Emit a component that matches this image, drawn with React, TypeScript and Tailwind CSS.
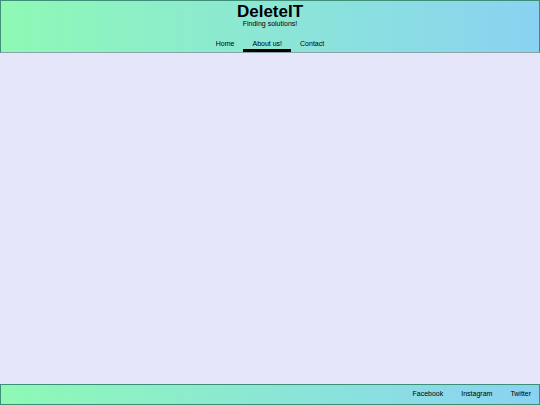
export default function App() {
  return (
    <div className="flex min-h-[405px] flex-col bg-[#e6e6fa] font-['Liberation_Sans',Arial,sans-serif] text-black">
      <header className="flex h-[53px] flex-col items-center border border-[#3f8f78] border-b-[#8aa3a8] bg-gradient-to-r from-[#8ef9b4] to-[#8ad2f2]">
        <h1 className="mt-[2px] text-[17px] font-bold leading-[17px]">DeleteIT</h1>
        <p className="text-[7px] leading-[8px]">Finding solutions!</p>
        <nav className="mt-auto flex text-[7px]">
          <a className="px-[9px] pb-[4px] leading-[8px]">Home</a>
          <a className="border-b-[3px] border-black px-[9px] pb-[1px] leading-[8px]">About us!</a>
          <a className="px-[9px] pb-[4px] leading-[8px]">Contact</a>
        </nav>
      </header>
      <main className="flex-1" />
      <footer className="flex h-[21px] items-center justify-end gap-[18px] border border-[#3f8f78] bg-gradient-to-r from-[#8ef9b4] to-[#8ad2f2] pr-[8px] text-[7px]">
        <a>Facebook</a>
        <a>Instagram</a>
        <a>Twitter</a>
      </footer>
    </div>
  )
}
